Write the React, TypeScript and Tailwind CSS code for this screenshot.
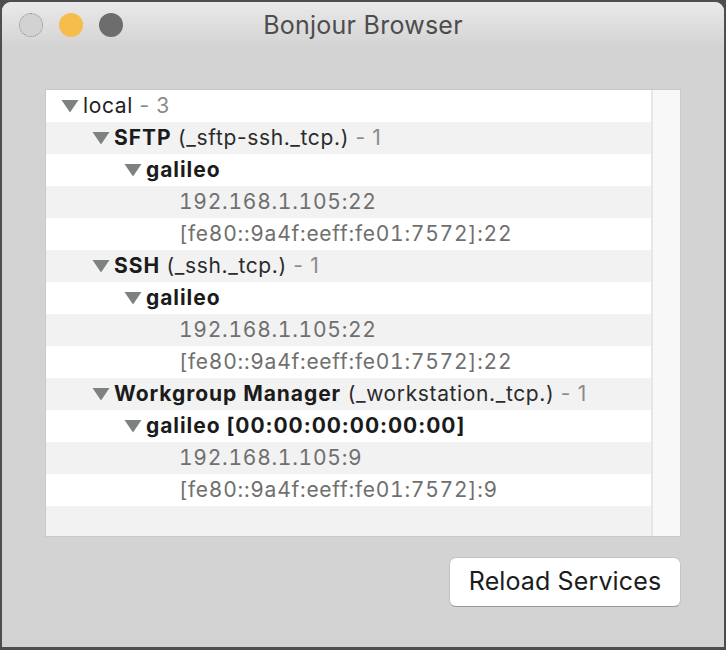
import React from "react";

type Row = {
  level: number;
  open?: boolean;
  name?: string;
  type?: string;
  count?: number;
  addr?: string;
  plain?: boolean;
};

const rows: Row[] = [
  { level: 0, open: true, name: "local", count: 3, plain: true },
  { level: 1, open: true, name: "SFTP", type: "(_sftp-ssh._tcp.)", count: 1 },
  { level: 2, open: true, name: "galileo" },
  { level: 3, addr: "192.168.1.105:22" },
  { level: 3, addr: "[fe80::9a4f:eeff:fe01:7572]:22" },
  { level: 1, open: true, name: "SSH", type: "(_ssh._tcp.)", count: 1 },
  { level: 2, open: true, name: "galileo" },
  { level: 3, addr: "192.168.1.105:22" },
  { level: 3, addr: "[fe80::9a4f:eeff:fe01:7572]:22" },
  { level: 1, open: true, name: "Workgroup Manager", type: "(_workstation._tcp.)", count: 1 },
  { level: 2, open: true, name: "galileo [00:00:00:00:00:00]" },
  { level: 3, addr: "192.168.1.105:9" },
  { level: 3, addr: "[fe80::9a4f:eeff:fe01:7572]:9" },
];

const indent = ["pl-[15px]", "pl-[46px]", "pl-[78px]", "pl-[111px]"];

const Disclosure = () => (
  <svg width="18" height="14" viewBox="0 0 18 14" className="mr-[4px] shrink-0 -mt-[1px]">
    <path d="M0.5 1 L17.5 1 L9 13.5 Z" fill="#7d817f" />
  </svg>
);

const TreeRow = ({ row, index }: { row: Row; index: number }) => {
  const bg = index % 2 === 0 ? "bg-white" : "bg-[#f2f2f2]";
  return (
    <div className={`h-[32px] flex items-center ${bg} ${indent[row.level]} whitespace-nowrap`}>
      {row.open ? <Disclosure /> : <span className="w-[22px] shrink-0" />}
      {row.addr ? (
        <span className="text-[#6f6f6f] tabular-nums tracking-[0.035em] -mt-[2px]">{row.addr}</span>
      ) : (
        <span className="-mt-[2px]">
          <span className={row.plain ? "text-[#222]" : "font-bold tracking-[0.045em] text-[#1b1b1b]"}>{row.name}</span>
          {row.type && <span className="text-[#2b2b2b]"> {row.type}</span>}
          {row.count !== undefined && <span className="text-[#8a8a8a]"> - {row.count}</span>}
        </span>
      )}
    </div>
  );
};

const App = () => {
  return (
    <div
      className="w-[726px] h-[650px] bg-[#4e4e4e] pt-[2px] px-[2px] pb-[3px]"
      style={{ fontFamily: "Inter, 'Liberation Sans', sans-serif" }}
    >
      <div className="w-full h-full rounded-t-[9px] bg-[#d3d3d3] flex flex-col overflow-hidden">
        {/* title bar */}
        <div className="h-[46px] shrink-0 flex items-center px-[17px] bg-gradient-to-b from-[#eaeaea] to-[#d3d3d3] relative">
          <div className="flex gap-[16px]">
            <span className="w-[24px] h-[24px] rounded-full bg-[#d2d2d2] border border-dotted border-[#8a8a8a]" />
            <span className="w-[24px] h-[24px] rounded-full bg-[#f6bd4c]" />
            <span className="w-[24px] h-[24px] rounded-full bg-[#6d6d6d]" />
          </div>
          <div className="absolute inset-0 pt-[2px] flex items-center justify-center text-[25px] tracking-[0.01em] text-[#4d4d4d] pointer-events-none">
            Bonjour Browser
          </div>
        </div>

        {/* outline view */}
        <div className="mt-[41px] ml-[43px] w-[636px] h-[448px] flex border border-[#c9c9c9] bg-white">
          <div className="flex-1 text-[21px] tracking-[0.03em] leading-none overflow-hidden">
            {rows.map((r, i) => (
              <TreeRow key={i} row={r} index={i} />
            ))}
            <div className="h-[32px] bg-[#f2f2f2]" />
          </div>
          <div className="w-[29px] shrink-0 bg-[#f8f8f8] border-l-2 border-[#e6e6e6]" />
        </div>

        {/* footer */}
        <div className="flex justify-end pr-[43px] mt-[20px]">
          <button className="w-[232px] h-[50px] rounded-[7px] bg-white border border-[#c4c4c4] border-b-[#9a9a9a] text-[25px] tracking-[0.005em] text-[#1c1c1c]">
            Reload Services
          </button>
        </div>
      </div>
    </div>
  );
};

export default App;
